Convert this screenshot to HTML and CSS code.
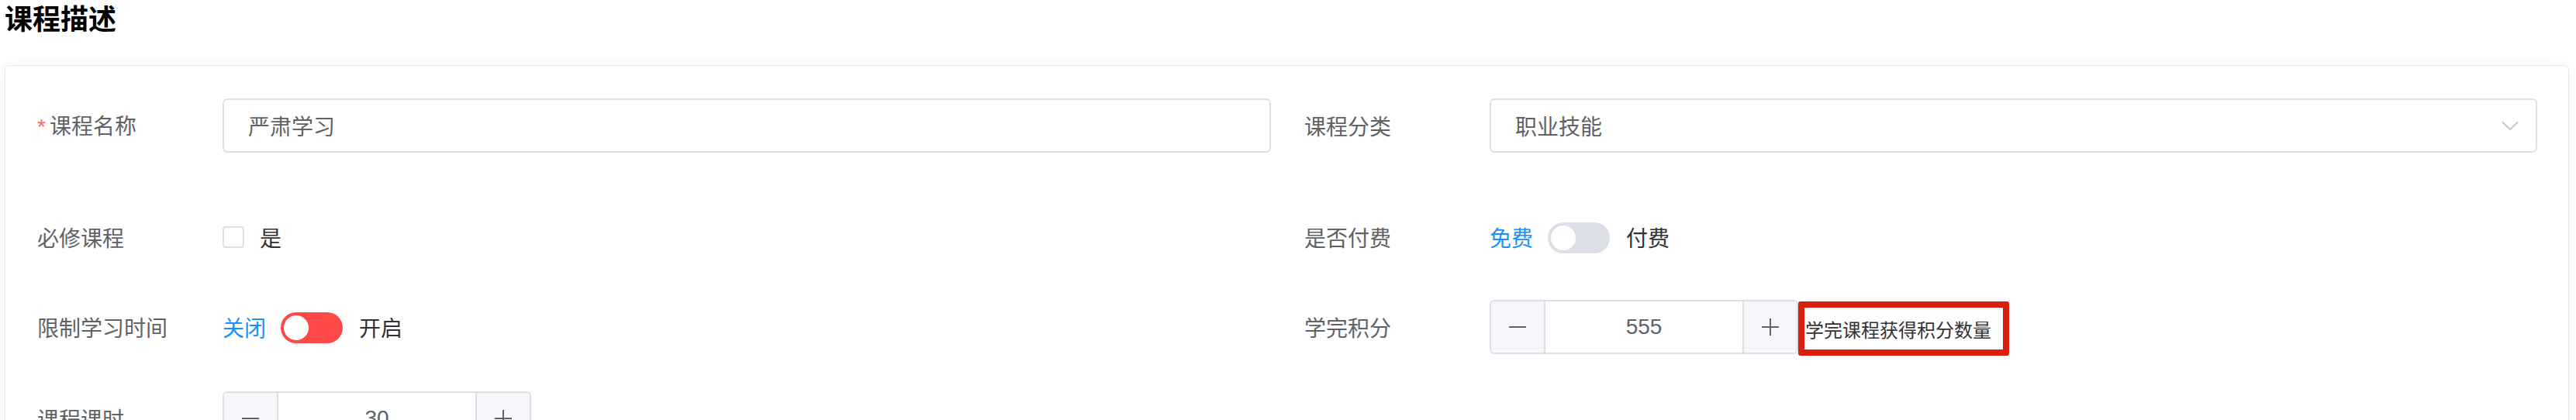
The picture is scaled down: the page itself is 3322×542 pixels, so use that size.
FILE: index.html
```html
<!DOCTYPE html>
<html lang="zh-CN">
<head>
<meta charset="utf-8">
<title>课程描述</title>
<link rel="stylesheet" href="styles.css">
</head>
<body>
<div class="page">
  <h1 class="title">课程描述</h1>
  <div class="card">
    <div class="row row-1">
      <div class="item">
        <div class="label"><span class="req">*</span>课程名称</div>
        <div class="input input-name">严肃学习</div>
      </div>
      <div class="item">
        <div class="label">课程分类</div>
        <div class="input select">
          <span>职业技能</span>
          <svg class="chev" width="22" height="13" viewBox="0 0 22 13"><path d="M1 1.5 L11 11 L21 1.5" fill="none" stroke="#c0c4cc" stroke-width="1.8"/></svg>
        </div>
      </div>
    </div>

    <div class="row row-2">
      <div class="item">
        <div class="label">必修课程</div>
        <div class="checkbox"></div>
        <span class="opt">是</span>
      </div>
      <div class="item">
        <div class="label">是否付费</div>
        <span class="sw-text active">免费</span>
        <div class="switch switch-off"><div class="knob"></div></div>
        <span class="sw-text">付费</span>
      </div>
    </div>

    <div class="row row-3">
      <div class="item">
        <div class="label">限制学习时间</div>
        <span class="sw-text active">关闭</span>
        <div class="switch switch-red"><div class="knob"></div></div>
        <span class="sw-text">开启</span>
      </div>
      <div class="item">
        <div class="label">学完积分</div>
        <div class="stepper">
          <div class="step-btn step-minus"><svg width="24" height="24" viewBox="0 0 24 24"><path d="M1 12 H23" stroke="#606266" stroke-width="2"/></svg></div>
          <div class="step-val">555</div>
          <div class="step-btn step-plus"><svg width="24" height="24" viewBox="0 0 24 24"><path d="M1 12 H23 M12 1 V23" stroke="#606266" stroke-width="2"/></svg></div>
        </div>
        <div class="hint">学完课程获得积分数量</div>
      </div>
    </div>

    <div class="row row-4">
      <div class="item">
        <div class="label">课程课时</div>
        <div class="stepper">
          <div class="step-btn step-minus"><svg width="24" height="24" viewBox="0 0 24 24"><path d="M1 12 H23" stroke="#606266" stroke-width="2"/></svg></div>
          <div class="step-val">30</div>
          <div class="step-btn step-plus"><svg width="24" height="24" viewBox="0 0 24 24"><path d="M1 12 H23 M12 1 V23" stroke="#606266" stroke-width="2"/></svg></div>
        </div>
      </div>
      <div class="item"></div>
    </div>
  </div>
</div>
</body>
</html>
```

FILE: styles.css
```css
* { box-sizing: border-box; }
html, body {
  margin: 0;
  padding: 0;
  background: #ffffff;
  overflow: hidden;
}
body {
  font-family: "Liberation Sans", "Noto Sans CJK SC", sans-serif;
  color: #606266;
}
.page {
  padding: 0 9px 0 6px;
}
.title {
  margin: 0;
  font-size: 36px;
  line-height: 44px;
  font-weight: 700;
  color: #000;
  font-family: "Noto Sans CJK SC", sans-serif;
}
.card {
  margin-top: 40px;
  border: 1px solid #e6e9f2;
  border-radius: 6px;
  box-shadow: 0 0 18px rgba(0, 0, 0, 0.05);
  padding: 42px 40px 0 41px;
  height: 600px;
  background: #fff;
}
.row {
  display: grid;
  grid-template-columns: 1634px 1fr;
}
.row-1 { margin-bottom: 74px; }
.row-2 { margin-bottom: 46px; }
.row-3 { margin-bottom: 48px; }
.item {
  display: flex;
  align-items: center;
  height: 70px;
}
.label {
  width: 239px;
  flex: none;
  font-size: 28px;
  line-height: 40px;
  color: #606266;
  font-family: "Noto Sans CJK SC", sans-serif;
}
.req {
  color: #f56c6c;
  font-family: "Liberation Sans", sans-serif;
  margin-right: 5px;
}
.input {
  height: 70px;
  border: 2px solid #dcdfe6;
  border-radius: 6px;
  padding: 0 22px 0 31px;
  font-size: 28px;
  color: #606266;
  display: flex;
  align-items: center;
  font-family: "Noto Sans CJK SC", sans-serif;
}
.input-name {
  width: 1352px;
}
.select {
  flex: 1;
  justify-content: space-between;
}
.chev {
  display: block;
}
.checkbox {
  width: 28px;
  height: 28px;
  border: 2px solid #dcdfe6;
  border-radius: 4px;
  background: #fff;
  flex: none;
}
.opt {
  margin-left: 20px;
  font-size: 28px;
  color: #333;
  font-family: "Noto Sans CJK SC", sans-serif;
}
.sw-text {
  font-size: 28px;
  color: #303133;
  font-family: "Noto Sans CJK SC", sans-serif;
}
.sw-text.active {
  color: #1890ff;
}
.switch {
  width: 80px;
  height: 40px;
  border-radius: 20px;
  padding: 4px;
  display: flex;
  flex: none;
  margin: 2px 21px 0 19px;
}
.switch-off { background: #dcdfe6; }
.switch-red { background: #ff4949; }
.knob {
  width: 32px;
  height: 32px;
  border-radius: 50%;
  background: #fff;
}
.stepper {
  width: 398px;
  height: 70px;
  border: 2px solid #dcdfe6;
  border-radius: 6px;
  display: flex;
  overflow: hidden;
  flex: none;
}
.step-btn {
  width: 70px;
  flex: none;
  background: #f5f7fa;
  display: flex;
  align-items: center;
  justify-content: center;
}
.step-minus { border-right: 2px solid #dcdfe6; }
.step-plus { border-left: 2px solid #dcdfe6; }
.step-val {
  flex: 1;
  display: flex;
  align-items: center;
  justify-content: center;
  font-size: 28px;
  color: #606266;
}
.hint {
  width: 272px;
  height: 70px;
  border: 8px solid #d91e0e;
  border-radius: 3px;
  margin-top: 4px;
  padding-left: 1px;
  display: flex;
  align-items: center;
  font-size: 24px;
  color: #333;
  white-space: nowrap;
  font-family: "Noto Sans CJK SC", sans-serif;
  flex: none;
}
```
